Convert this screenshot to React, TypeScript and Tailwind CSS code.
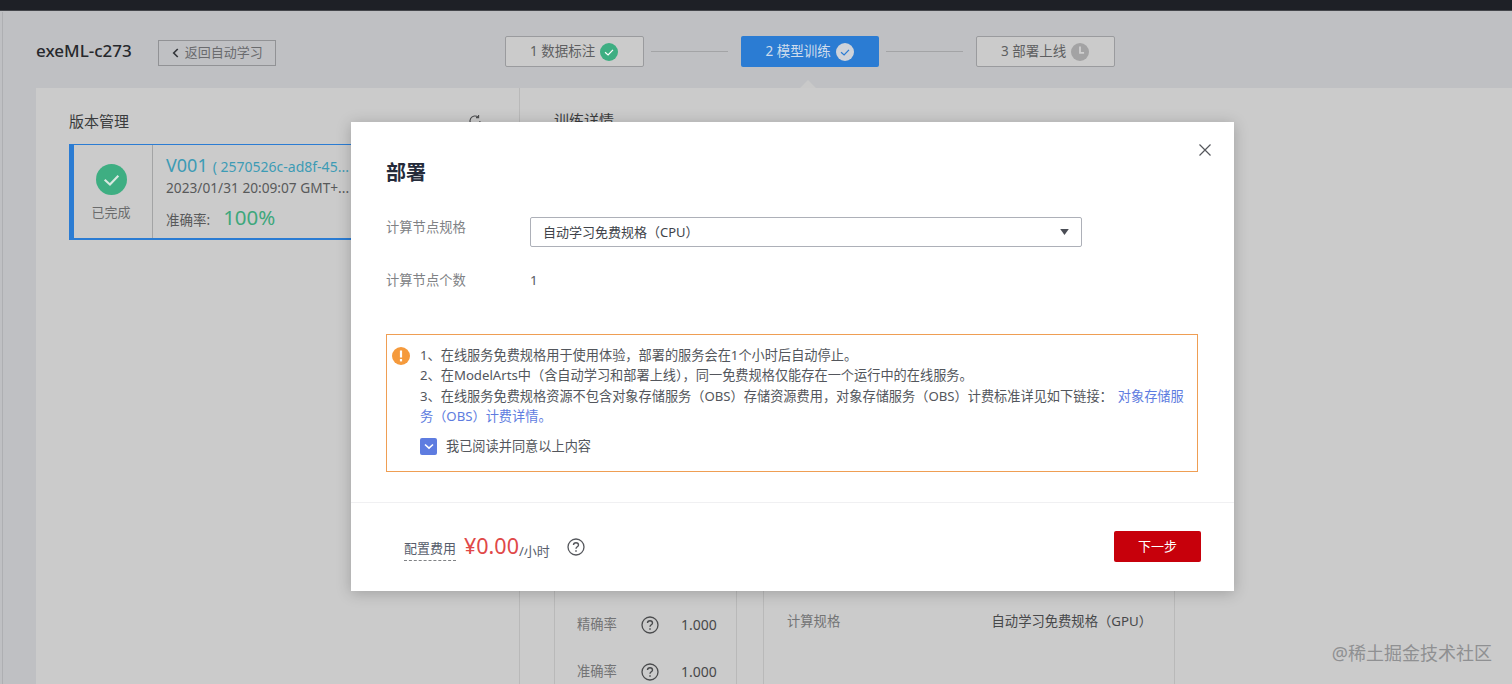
import React from "react";

const font = { fontFamily: '"Noto Sans","Noto Sans CJK SC",sans-serif' };

function Check({ className, color = "white" }: { className?: string; color?: string }) {
  return (
    <svg viewBox="0 0 20 20" className={className}>
      <circle cx="10" cy="10" r="10" fill="currentColor" />
      <path d="M5.6 10.2 9 13.2l5.4-5.6" fill="none" stroke={color} strokeWidth="1.4" />
    </svg>
  );
}

function Question({ className }: { className?: string }) {
  return (
    <svg viewBox="0 0 18 18" className={className} fill="none" stroke="currentColor">
      <circle cx="9" cy="9" r="8" strokeWidth="1.3" />
      <path d="M6.5 7.1c0-1.5 1.1-2.4 2.5-2.4s2.5.9 2.5 2.2c0 1.9-2.5 1.9-2.5 3.9" strokeWidth="1.4" />
      <path d="M9 12.3v1.5" strokeWidth="1.5" />
    </svg>
  );
}

function Step({ label, active, icon }: { label: string; active?: boolean; icon: React.ReactNode }) {
  return (
    <div
      className={
        active
          ? "flex h-[31px] w-[138px] items-center justify-center gap-[5px] rounded-[2px] bg-[#2b7cd3] text-[13.5px] text-[#cfdcec]"
          : "flex h-[31px] w-[139px] items-center justify-center gap-[5px] rounded-[2px] border border-[#9a9b9e] bg-[#cbcbcb] text-[13.5px] text-[#5e5f61]"
      }
    >
      <span>{label}</span>
      {icon}
    </div>
  );
}

export default function App() {
  return (
    <div style={font} className="relative flex h-[684px] w-[1512px] flex-col overflow-hidden bg-[#bfc0c3]">
      <div className="h-[11px] shrink-0 border-b border-[#44464b] bg-[#1e2026]" />
      <div className="absolute bottom-0 left-[2px] top-[12px] w-px bg-[#aeafb2]" />

      <div className="flex h-[77px] shrink-0 items-center pl-[36px] pt-[4px]">
        <div className="mt-[-2px] text-[17px] font-medium text-[#26282c]">exeML-c273</div>
        <div className="ml-[26px] mt-[2px] flex h-[26px] w-[118px] items-center justify-center gap-[5px] border border-[#919295] text-[13px] text-[#6a6b6e]">
          <svg viewBox="0 0 10 12" className="h-[12px] w-[9px]" fill="none" stroke="#33353a" strokeWidth="1.8">
            <path d="M7.5 1.5 3 6l4.5 4.5" />
          </svg>
          <span>返回自动学习</span>
        </div>
        <div className="ml-[229px] flex items-center">
          <Step label="1 数据标注" icon={<Check className="h-[18px] w-[18px] text-[#3eae82]" />} />
          <div className="ml-[7px] mr-[13px] h-px w-[77px] bg-[#a3a4a6]" />
          <div className="relative">
            <Step label="2 模型训练" active icon={<Check className="h-[18px] w-[18px] text-[#cfd3da]" color="#2b7cd3" />} />
            <div className="absolute left-[60px] top-[47px] h-[14px] w-[14px] rotate-45 bg-[#c9c9c9]" />
          </div>
          <div className="ml-[7px] mr-[13px] h-px w-[77px] bg-[#a3a4a6]" />
          <Step
            label="3 部署上线"
            icon={
              <svg viewBox="0 0 20 20" className="h-[18px] w-[18px]">
                <circle cx="10" cy="10" r="10" fill="#a3a3a4" />
                <path d="M10 4v7h4.5" fill="none" stroke="#d0d0d0" strokeWidth="2" />
              </svg>
            }
          />
        </div>
      </div>

      <div className="relative ml-[36px] flex min-h-0 flex-1 bg-[#cbcbcb]">
        <div className="w-[484px] shrink-0 border-r border-[#b9b9b9] pl-[33px] pt-[22px]">
          <div className="flex h-[22px] items-center justify-between pr-[37px]">
            <span className="text-[15px] text-[#3a3b3d]">版本管理</span>
            <svg viewBox="0 0 14 14" className="h-[14px] w-[14px]" fill="none" stroke="#4a4b4d" strokeWidth="1.1">
              <path d="M12 7a5 5 0 1 1-1.6-3.7M10.6 1v2.6H8" />
            </svg>
          </div>
          <div className="mt-[12px] flex h-[96px] w-[300px] border-b-2 border-l-[5px] border-t border-[#2b7cd3]">
            <div className="flex w-[79px] shrink-0 flex-col items-center border-r border-[#a3a4a5] pr-[4px] pt-[19px]">
              <Check className="h-[31px] w-[31px] text-[#3eae82]" color="#d8e8e0" />
              <span className="mt-[8px] text-[13px] leading-[18px] text-[#6a6b6c]">已完成</span>
            </div>
            <div className="min-w-0 pl-[13px] pt-[7px]">
              <div className="flex items-baseline whitespace-nowrap text-[#3d9bb5]">
                <span className="text-[18px]">V001</span>
                <span className="ml-[5px] text-[14px]">( 2570526c-ad8f-45...</span>
              </div>
              <div className="mt-[-1px] whitespace-nowrap text-[13.7px] text-[#58595a]">2023/01/31 20:09:07 GMT+...</div>
              <div className="mt-[4px] flex items-baseline whitespace-nowrap">
                <span className="text-[13.5px] text-[#58595a]">准确率:</span>
                <span className="ml-[13px] text-[20.5px] leading-[28px] text-[#3ea77c]">100%</span>
              </div>
            </div>
          </div>
        </div>

        <div className="flex min-w-0 flex-1 flex-col pl-[34px] pt-[21px]">
          <div className="text-[15px] text-[#3a3b3d]">训练详情</div>
          <div className="mt-auto flex">
            <div className="h-[190px] w-[183px] border-x border-[#b9b9b9] pl-[22px] pt-[119px] text-[13.3px]">
              <div className="flex h-[24px] items-center">
                <span className="w-[64px] text-[#737475]">精确率</span>
                <Question className="h-[18px] w-[18px] text-[#4a4b4d]" />
                <span className="mb-[2px] ml-[22px] text-[14px] text-[#47484a]">1.000</span>
              </div>
              <div className="mt-[23px] flex h-[24px] items-center">
                <span className="w-[64px] text-[#737475]">准确率</span>
                <Question className="h-[18px] w-[18px] text-[#4a4b4d]" />
                <span className="mb-[2px] ml-[22px] text-[14px] text-[#47484a]">1.000</span>
              </div>
            </div>
            <div className="ml-[26px] h-[190px] w-[412px] border-x border-[#b9b9b9] pl-[23px] pr-[22px] pt-[116px] text-[13.3px]">
              <div className="flex h-[24px] items-center justify-between">
                <span className="text-[#737475]">计算规格</span>
                <span className="text-[#47484a]">自动学习免费规格（GPU）</span>
              </div>
            </div>
          </div>
        </div>
      </div>

      <div className="absolute bottom-[17px] right-[20px] text-[18px] text-[#8f9092]">@稀土掘金技术社区</div>

      <div className="absolute left-[351px] top-[122px] flex h-[469px] w-[883px] flex-col bg-white shadow-[0_2px_14px_rgba(0,0,0,0.22)]">
        <div className="relative flex-1 px-[35px] pt-[37px]">
          <svg viewBox="0 0 12 12" className="absolute right-[23px] top-[22px] h-[12px] w-[12px]" fill="none" stroke="#55575c" strokeWidth="1.2">
            <path d="m.5.5 11 11M11.5.5l-11 11" />
          </svg>
          <div className="text-[20px] font-semibold leading-[28px] text-[#252b3a]">部署</div>
          <div className="mt-[30px] flex h-[30px] items-start text-[13.3px]">
            <span className="w-[144px] pt-[1px] text-[#808285]">计算节点规格</span>
            <div className="flex h-[30px] w-[552px] items-center justify-between rounded-[2px] border border-[#adb0b8] px-[12px] pt-[2px] text-[13px] text-[#40434a]">
              <span>自动学习免费规格（CPU）</span>
              <svg viewBox="0 0 10 7" className="mb-[2px] h-[6px] w-[9px]">
                <path d="M0 0h10L5 7z" fill="#4a4d55" />
              </svg>
            </div>
          </div>
          <div className="mt-[24px] flex text-[13.3px]">
            <span className="w-[144px] text-[#808285]">计算节点个数</span>
            <span className="text-[#55585f]">1</span>
          </div>
          <div className="mt-[43px] flex h-[138px] w-[812px] border border-[#ef9e54] pl-[5px] pr-[8px] pt-[10px]">
            <svg viewBox="0 0 18 18" className="mt-[2px] h-[18px] w-[18px] shrink-0">
              <circle cx="9" cy="9" r="9" fill="#f59a3c" />
              <path d="M9 3.5v7" stroke="white" strokeWidth="2.2" />
              <path d="M9 12v2.4" stroke="white" strokeWidth="2.2" />
            </svg>
            <div className="ml-[10px] min-w-0 flex-1 text-[13.2px] leading-[20.5px] text-[#53565c]">
              <div>1、在线服务免费规格用于使用体验，部署的服务会在1个小时后自动停止。</div>
              <div>2、在ModelArts中（含自动学习和部署上线），同一免费规格仅能存在一个运行中的在线服务。</div>
              <div>
                3、在线服务免费规格资源不包含对象存储服务（OBS）存储资源费用，对象存储服务（OBS）计费标准详见如下链接：
                <span className="ml-[5px] text-[#5e7ce0]">对象存储服务（OBS）计费详情。</span>
              </div>
              <div className="mt-[9px] flex items-center gap-[9px]">
                <span className="flex h-[17px] w-[17px] items-center justify-center rounded-[2px] bg-[#5e7ce0]">
                  <svg viewBox="0 0 12 12" className="h-[12px] w-[12px]" fill="none" stroke="white" strokeWidth="1.6">
                    <path d="m2 4.5 4 3.6 4-3.6" />
                  </svg>
                </span>
                <span>我已阅读并同意以上内容</span>
              </div>
            </div>
          </div>
        </div>
        <div className="flex h-[89px] shrink-0 items-start border-t border-[#f0f0f2] pl-[53px] pr-[33px] pt-[28px]">
          <span className="mt-[7px] h-[23px] border-b border-dashed border-[#808285] text-[13px] leading-[20px] text-[#575d6c]">配置费用</span>
          <span className="ml-[8px] text-[21.5px] leading-[30px] text-[#e04848]">¥0.00</span>
          <span className="mt-[10px] text-[13px] leading-[20px] text-[#575d6c]">/小时</span>
          <Question className="ml-[17px] mt-[7px] h-[18px] w-[18px] text-[#55575c]" />
          <button className="ml-auto h-[31px] w-[87px] rounded-[2px] bg-[#c7000b] text-[13px] text-white">下一步</button>
        </div>
      </div>
    </div>
  );
}
